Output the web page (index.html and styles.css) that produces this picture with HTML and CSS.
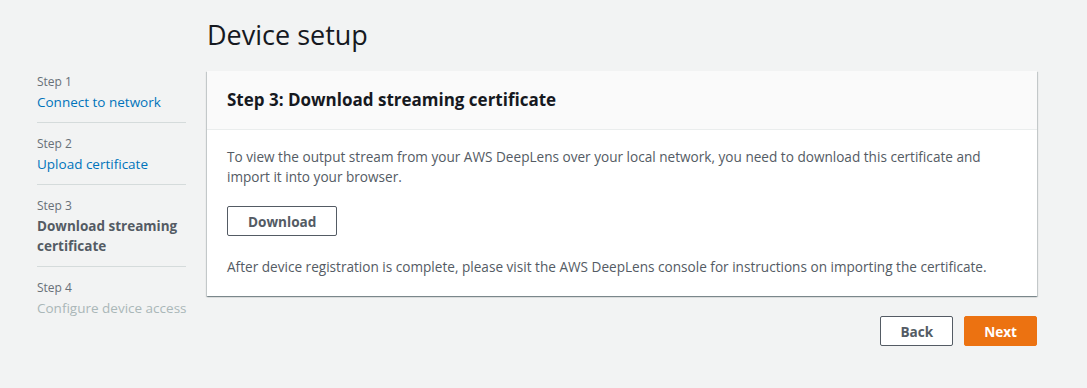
FILE: index.html
```
<!DOCTYPE html>
<html lang="en">
<head>
    <meta charset="UTF-8">
    <meta name="viewport" content="width=device-width, initial-scale=1.0">
    <title>Device setup</title>
    <link rel="stylesheet" href="styles.css">
</head>
<body>
    <div class="page">
        <nav class="steps">
            <div class="step">
                <div class="step-label">Step 1</div>
                <a class="step-title step-link" href="#">Connect to network</a>
            </div>
            <div class="step">
                <div class="step-label">Step 2</div>
                <a class="step-title step-link" href="#">Upload certificate</a>
            </div>
            <div class="step">
                <div class="step-label">Step 3</div>
                <div class="step-title step-current">Download streaming certificate</div>
            </div>
            <div class="step">
                <div class="step-label">Step 4</div>
                <div class="step-title step-disabled">Configure device access</div>
            </div>
        </nav>

        <main class="content">
            <h1>Device setup</h1>
            <section class="card">
                <div class="card-header">Step 3: Download streaming certificate</div>
                <div class="card-body">
                    <p>To view the output stream from your AWS DeepLens over your local network, you need to download this certificate and import it into your browser.</p>
                    <button class="btn">Download</button>
                    <p>After device registration is complete, please visit the AWS DeepLens console for instructions on importing the certificate.</p>
                </div>
            </section>
            <div class="actions">
                <button class="btn">Back</button>
                <button class="btn btn-primary">Next</button>
            </div>
        </main>
    </div>
</body>
</html>
```

FILE: styles.css
```
:root {
    --bg-color: #f2f3f3;
    --text-color: #545b64;
    --heading-color: #16191f;
    --link-color: #0073bb;
    --divider-color: #d5dbdb;
    --primary-color: #ec7211;
}

body {
    font-family: 'Open Sans', 'Noto Sans', sans-serif;
    background-color: var(--bg-color);
    color: var(--text-color);
    margin: 0;
    font-size: 13.6px;
}

.page {
    display: grid;
    grid-template-columns: 149px 830px;
    column-gap: 21px;
    padding: 17px 0 0 37px;
}

/* 左侧步骤导航 */
.steps {
    margin-top: 44px;
}

.step {
    padding: 12px 0 10px;
    border-bottom: 1px solid var(--divider-color);
}

.step:last-child {
    border-bottom: none;
}

.step-label {
    font-size: 12px;
    line-height: 18px;
    color: #687078;
}

.step-title {
    display: block;
    margin-top: 1px;
    font-size: 13.5px;
    line-height: 20px;
    white-space: nowrap;
}

.step-link {
    color: var(--link-color);
    text-decoration: none;
}

.step-current {
    color: var(--text-color);
    font-weight: 700;
    white-space: normal;
}

.step-disabled {
    color: #aab7b8;
}

/* 主要内容 */
h1 {
    margin: 0 0 18px;
    font-size: 27px;
    line-height: 36px;
    font-weight: 400;
    color: var(--heading-color);
}

.card {
    background: white;
    box-shadow: 0 1px 1px 0 rgba(0,28,36,0.3), 1px 1px 1px 0 rgba(0,28,36,0.15), -1px 1px 1px 0 rgba(0,28,36,0.15);
}

.card-header {
    background: #fafafa;
    padding: 19px 20px;
    border-bottom: 1px solid #eaeded;
    font-size: 17px;
    line-height: 20px;
    font-weight: 700;
    color: var(--heading-color);
}

.card-body {
    padding: 17px 20px 19px;
}

.card-body p {
    margin: 0;
    line-height: 20px;
}

.card-body .btn {
    margin: 19px 0 21px;
}

.btn {
    font-family: inherit;
    display: block;
    height: 30px;
    padding: 0 20px;
    background: white;
    border: 1px solid var(--text-color);
    border-radius: 2px;
    color: var(--text-color);
    font-size: 13.6px;
    font-weight: 700;
    cursor: pointer;
}

.actions {
    display: flex;
    justify-content: flex-end;
    gap: 11px;
    margin-top: 20px;
}

.actions .btn {
    padding: 0 19px;
}

.btn-primary {
    background: var(--primary-color);
    border-color: var(--primary-color);
    color: white;
}
```
